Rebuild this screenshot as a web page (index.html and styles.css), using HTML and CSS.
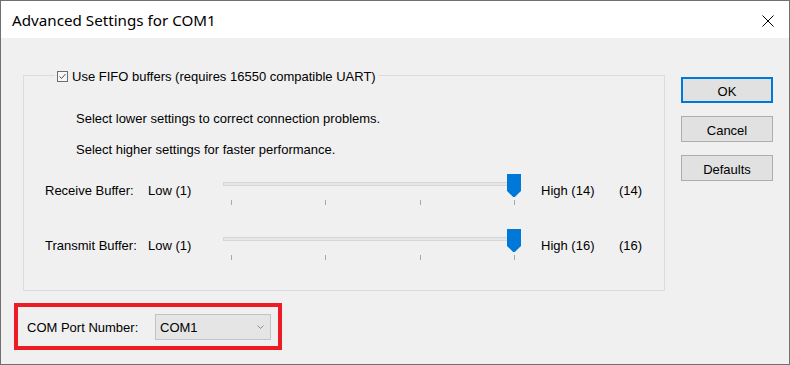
FILE: index.html
```html
<!DOCTYPE html>
<html>
<head>
<meta charset="utf-8">
<link rel="stylesheet" href="styles.css">
</head>
<body>
<div class="window">
  <div class="titlebar">
    <span class="title">Advanced Settings for COM1</span>
    <svg class="close" width="12" height="12" viewBox="0 0 12 12"><path d="M0.5 0.5 L11.5 11.5 M11.5 0.5 L0.5 11.5" stroke="#000" stroke-width="1" fill="none"/></svg>
  </div>
  <div class="client">
    <div class="main-row">
      <div class="group">
        <div class="legend">
          <svg class="check" width="11" height="11" viewBox="0 0 11 11"><rect x="0.5" y="0.5" width="10" height="10" fill="#f8f8f8" stroke="#6d6d6d"/><path d="M2.5 5.5 L4.5 7.5 L8.5 3" stroke="#4d4d4d" stroke-width="1" fill="none"/></svg>
          <span>Use FIFO buffers (requires 16550 compatible UART)</span>
        </div>
        <p class="note first">Select lower settings to correct connection problems.</p>
        <p class="note">Select higher settings for faster performance.</p>
        <div class="slider-row first-row">
          <span class="lbl name">Receive Buffer:</span>
          <span class="lbl low">Low (1)</span>
          <div class="slider">
            <div class="track"></div>
            <svg class="thumb" width="14" height="23" viewBox="0 0 14 23"><path d="M0 0 H14 V17 L7.8 23 H6.2 L0 17 Z" fill="#0078d7"/></svg>
            <div class="ticks"><i></i><i></i><i></i><i></i></div>
          </div>
          <span class="lbl high">High (14)</span>
          <span class="lbl val">(14)</span>
        </div>
        <div class="slider-row">
          <span class="lbl name">Transmit Buffer:</span>
          <span class="lbl low">Low (1)</span>
          <div class="slider">
            <div class="track"></div>
            <svg class="thumb" width="14" height="23" viewBox="0 0 14 23"><path d="M0 0 H14 V17 L7.8 23 H6.2 L0 17 Z" fill="#0078d7"/></svg>
            <div class="ticks"><i></i><i></i><i></i><i></i></div>
          </div>
          <span class="lbl high">High (16)</span>
          <span class="lbl val">(16)</span>
        </div>
      </div>
      <div class="buttons">
        <button class="btn default">OK</button>
        <button class="btn">Cancel</button>
        <button class="btn">Defaults</button>
      </div>
    </div>
    <div class="highlight">
      <span class="port-label">COM Port Number:</span>
      <div class="combo">
        <span class="combo-text">COM1</span>
        <svg class="chev" width="7" height="4" viewBox="0 0 7 4"><path d="M0.5 0.5 L3.5 3.5 L6.5 0.5" stroke="#8a8a8a" stroke-width="1" fill="none"/></svg>
      </div>
    </div>
  </div>
</div>
</body>
</html>
```

FILE: styles.css
```css
html, body {
  margin: 0;
  padding: 0;
  background: #f0f0f0;
}
.window {
  width: 790px;
  height: 365px;
  box-sizing: border-box;
  border: 1px solid #707070;
  background: #f0f0f0;
  font-family: "Liberation Sans", Arial, sans-serif;
  font-size: 13px;
  line-height: 15px;
  color: #000;
  overflow: hidden;
}
.titlebar {
  height: 37px;
  background: #fff;
  display: flex;
  align-items: center;
  justify-content: space-between;
  padding: 0 14px 0 11px;
}
.title {
  font-family: "Noto Sans", "Open Sans", sans-serif;
  font-size: 15.2px;
  color: #000;
  margin-top: 2px;
}
.close {
  margin-top: 2px;
  margin-right: 1px;
}
.client {
  padding: 37px 0 0 13px;
}
.main-row {
  display: flex;
  align-items: flex-start;
  margin-left: 9px;
}
.group {
  position: relative;
  width: 642px;
  height: 216px;
  box-sizing: border-box;
  border: 1px solid #dcdcdc;
  padding: 35px 0 0 0;
}
.legend {
  position: absolute;
  top: -7px;
  left: 31px;
  background: #f0f0f0;
  padding: 0 2px;
  display: flex;
  align-items: center;
  gap: 4px;
}
.check {
  display: block;
}
.note {
  margin: 0 0 16px 52px;
}
.note + .note {
  margin-bottom: 0;
}
.slider-row {
  display: flex;
  align-items: flex-start;
  padding-left: 21px;
  margin-top: 23px;
}
.slider-row.first-row {
  margin-top: 17px;
}
.lbl {
  margin-top: 9px;
  white-space: nowrap;
}
.name { width: 103px; }
.low { width: 75px; }
.high { width: 78px; margin-left: 18px; }
.slider {
  position: relative;
  width: 300px;
  height: 32px;
}
.track {
  margin-top: 8px;
  margin-right: 2px;
  height: 4px;
  box-sizing: border-box;
  background: #e7e7e7;
  border: 1px solid #d6d6d6;
}
.thumb {
  position: absolute;
  top: 0;
  left: 284px;
}
.ticks {
  display: flex;
  justify-content: space-between;
  width: 284px;
  margin: 14px 0 0 8px;
}
.ticks i {
  display: block;
  width: 1px;
  height: 5px;
  background: #a9a9a9;
}
.buttons {
  display: flex;
  flex-direction: column;
  gap: 13px;
  margin-left: 16px;
  padding-top: 2px;
}
.btn {
  width: 92px;
  height: 26px;
  box-sizing: border-box;
  background: #e1e1e1;
  border: 1px solid #adadad;
  font-family: "Liberation Sans", Arial, sans-serif;
  font-size: 13px;
  color: #000;
  padding: 2px 0 0 0;
  margin: 0;
}
.btn.default {
  border: 2px solid #0078d7;
}
.highlight {
  margin-top: 12px;
  width: 268px;
  height: 47px;
  box-sizing: border-box;
  border: 4px solid #ed1c24;
  display: flex;
  align-items: center;
  padding: 0 7px 0 9px;
}
.port-label {
  width: 128px;
  white-space: nowrap;
  padding-top: 2px;
}
.combo {
  width: 116px;
  height: 26px;
  box-sizing: border-box;
  background: #e5e5e5;
  border: 1px solid #c3c3c3;
  display: flex;
  align-items: center;
  justify-content: space-between;
  padding: 0 6px 0 4px;
}
.combo-text {
  padding-top: 2px;
}
.chev {
  display: block;
}
```
